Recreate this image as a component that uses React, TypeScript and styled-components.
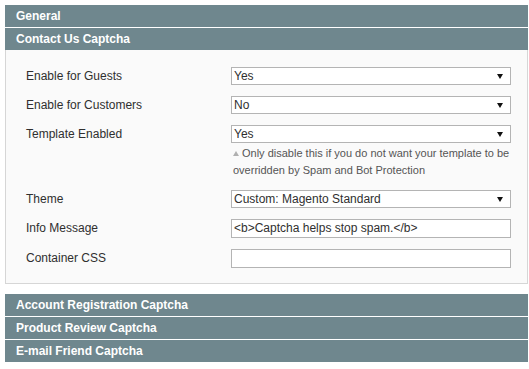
import React from 'react'
import styled, { createGlobalStyle } from 'styled-components'

const GlobalStyle = createGlobalStyle`
  body {
    margin: 0;
    background: #fff;
    font-family: "Liberation Sans", Arial, sans-serif;
    font-size: 12px;
    color: #2f2f2f;
  }
`

const Page = styled.div`
  width: 523px;
  padding: 5px 0 0 5px;
`

const SectionHead = styled.h4`
  margin: 0 0 1px;
  height: 22px;
  line-height: 22px;
  padding: 0 11px;
  background: #6f878e;
  color: #fff;
  font-size: 12px;
  font-weight: bold;
`

const Fieldset = styled.div`
  display: grid;
  grid-template-columns: 205px 280px;
  row-gap: 11px;
  align-items: start;
  margin: -1px 0 10px;
  padding: 17px 0 15px 20px;
  background: #fafafa;
  border: 1px solid #d6d6d6;
  border-top: 0;
`

const Label = styled.label<{ $tall?: boolean }>`
  line-height: ${(p) => (p.$tall ? '19px' : '18px')};
  color: #2f2f2f;
`

const Field = styled.div`
  display: flex;
  flex-direction: column;
`

const SelectBox = styled.div`
  display: flex;
  align-items: center;
  justify-content: space-between;
  box-sizing: border-box;
  height: 18px;
  padding: 0 7px 0 2px;
  background: #fff;
  border: 1px solid #b4b4b4;
  color: #2f2f2f;
`

const TextInput = styled.div`
  box-sizing: border-box;
  height: 19px;
  line-height: 17px;
  padding: 0 2px;
  background: #fff;
  border: 1px solid #b4b4b4;
  color: #2f2f2f;
  white-space: nowrap;
`

const Note = styled.p`
  margin: 2px 0 0;
  padding-left: 2px;
  font-size: 11px;
  line-height: 17px;
  color: #555;

  svg {
    margin-right: 3px;
    vertical-align: 1px;
  }
`

const Arrow = () => (
  <svg width="6" height="5" viewBox="0 0 6 5">
    <polygon points="0,0 6,0 3,5" fill="#111" />
  </svg>
)

const Select = ({ value }: { value: string }) => (
  <SelectBox>
    <span>{value}</span>
    <Arrow />
  </SelectBox>
)

export default function App() {
  return (
    <Page>
      <GlobalStyle />
      <SectionHead>General</SectionHead>
      <SectionHead>Contact Us Captcha</SectionHead>
      <Fieldset>
        <Label>Enable for Guests</Label>
        <Field>
          <Select value="Yes" />
        </Field>

        <Label>Enable for Customers</Label>
        <Field>
          <Select value="No" />
        </Field>

        <Label>Template Enabled</Label>
        <Field>
          <Select value="Yes" />
          <Note>
            <svg width="6" height="5" viewBox="0 0 6 5">
              <polygon points="3,0 6,5 0,5" fill="#b0b0b0" />
            </svg>
            Only disable this if you do not want your template to be overridden by Spam and Bot Protection
          </Note>
        </Field>

        <Label>Theme</Label>
        <Field>
          <Select value="Custom: Magento Standard" />
        </Field>

        <Label $tall>Info Message</Label>
        <Field>
          <TextInput>{'<b>Captcha helps stop spam.</b>'}</TextInput>
        </Field>

        <Label $tall>Container CSS</Label>
        <Field>
          <TextInput />
        </Field>
      </Fieldset>
      <SectionHead>Account Registration Captcha</SectionHead>
      <SectionHead>Product Review Captcha</SectionHead>
      <SectionHead>E-mail Friend Captcha</SectionHead>
    </Page>
  )
}
